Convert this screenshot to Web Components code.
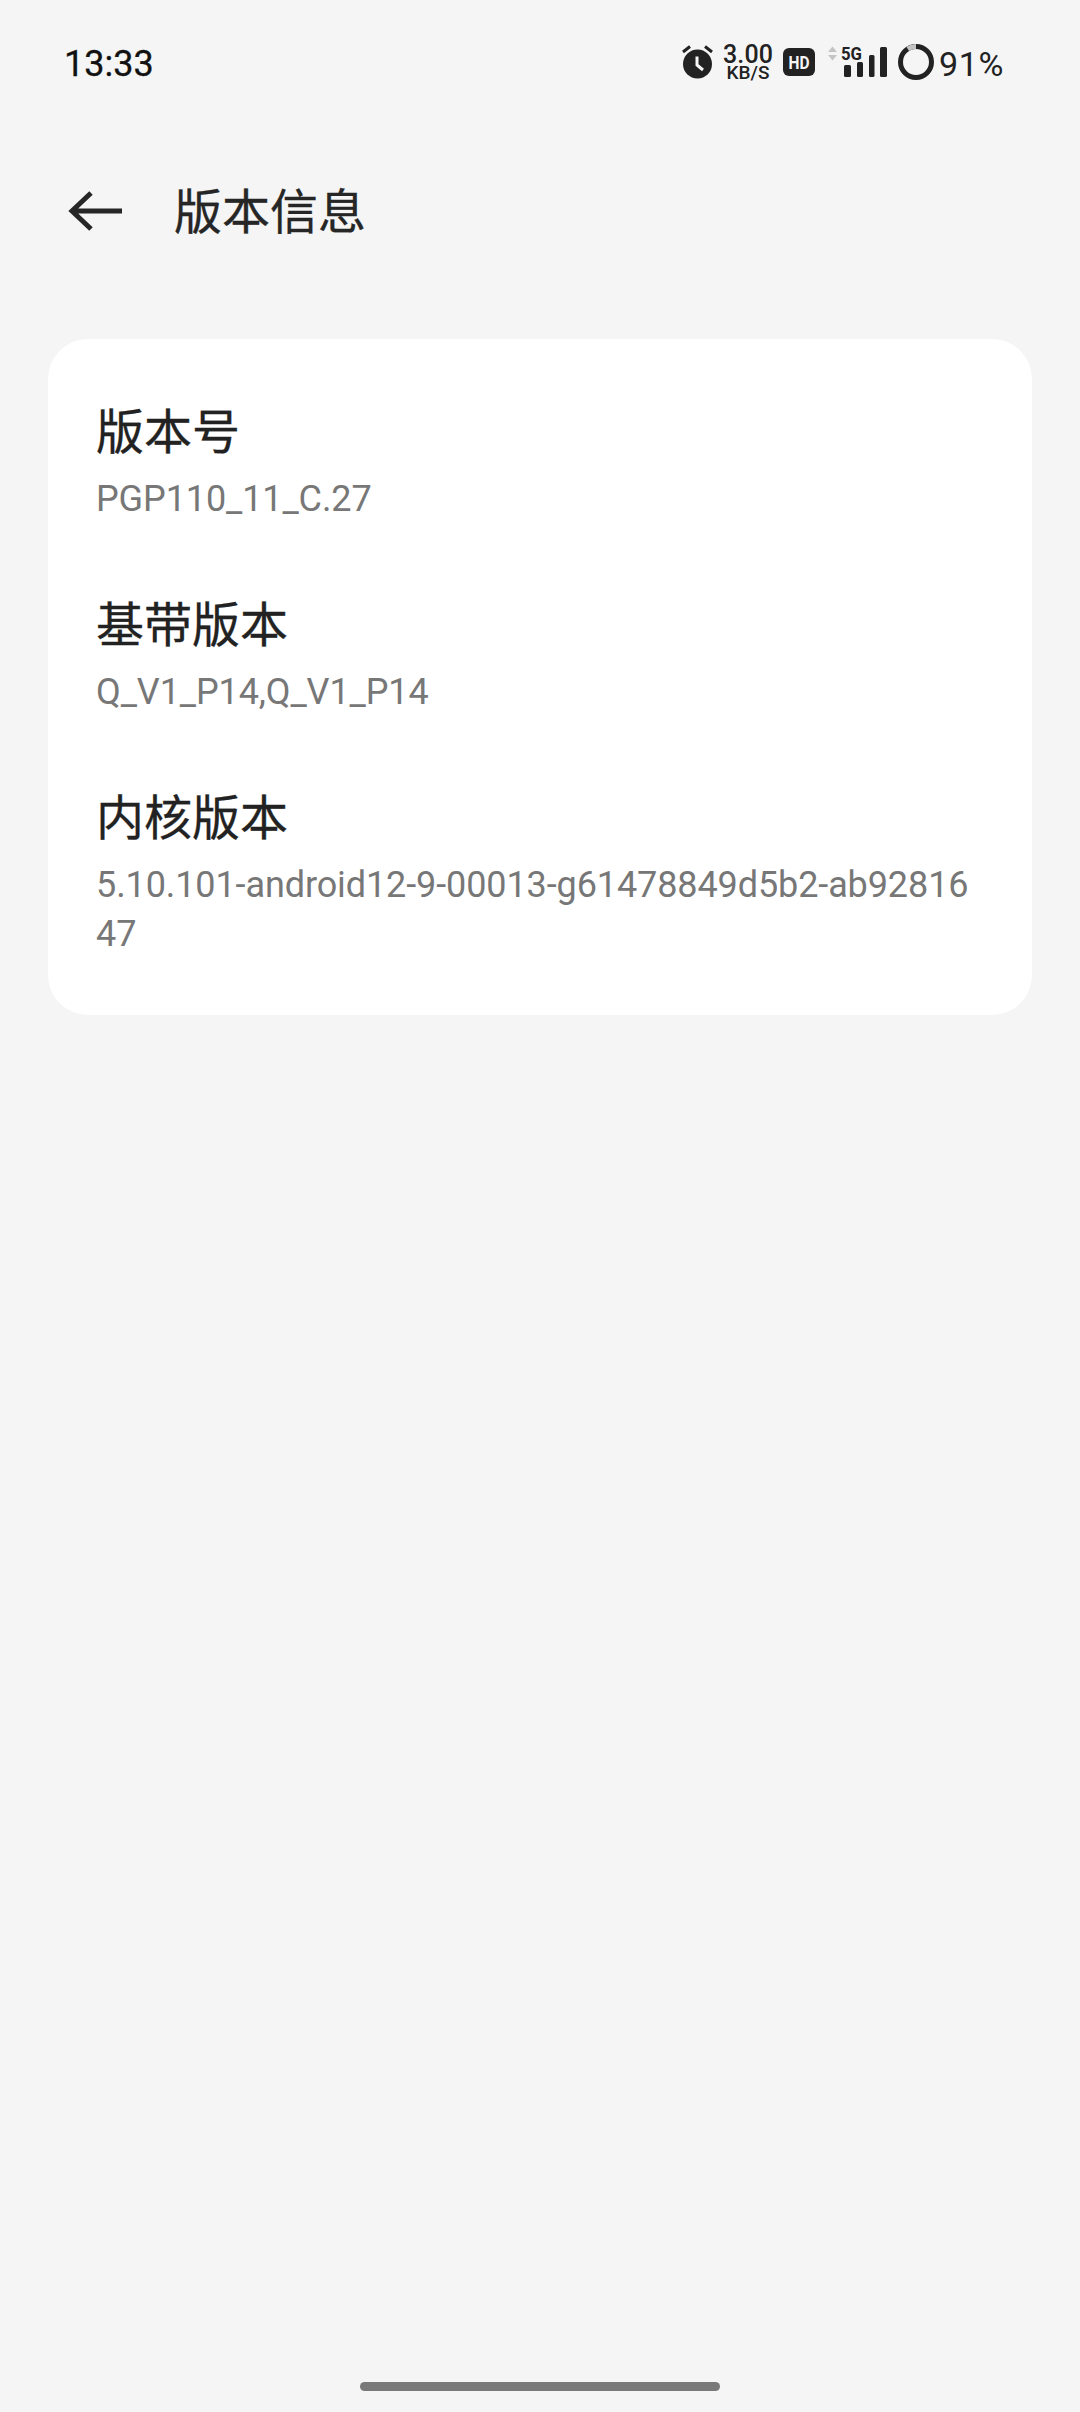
<!DOCTYPE html>
<html lang="zh-CN"><head><meta charset="utf-8"><title>版本信息</title>
<style>
html,body{margin:0;padding:0;background:#f5f5f5}
body{width:1080px;height:2412px;font-family:Roboto,"Noto Sans CJK SC",sans-serif;display:flex;flex-direction:column;overflow:hidden}
</style></head><body>
<status-bar></status-bar>
<app-bar>版本信息</app-bar>
<info-card>
  <info-row label="版本号" value="PGP110_11_C.27"></info-row>
  <info-row label="基带版本" value="Q_V1_P14,Q_V1_P14"></info-row>
  <info-row label="内核版本" value="5.10.101-android12-9-00013-g61478849d5b2-ab9281647"></info-row>
</info-card>
<gesture-bar></gesture-bar>
<script>
function def(name, html){
  customElements.define(name, class extends HTMLElement{
    constructor(){super();this.attachShadow({mode:'open'}).innerHTML=html;}
  });
}
def('status-bar',`<style>
:host{display:flex;align-items:center;justify-content:space-between;height:128px;box-sizing:border-box;padding:0 76px 0 64px;color:#222;flex:none}
.t{font:400 36px/44px Roboto,sans-serif;color:#111;-webkit-text-stroke:.3px #111}
.r{display:flex;align-items:center;margin-top:-4px}
svg{display:block;flex:none}
.sp{display:flex;flex-direction:column;align-items:center;width:50px;margin:0 10px 0 9px}
.sp b{font:500 25px/19px Roboto,sans-serif;letter-spacing:.2px}
.sp i{font:500 19px/15px Roboto,sans-serif;font-style:normal;margin-top:1px}
.pc{font:400 34px/44px Roboto,sans-serif;margin:3px 0 0 5px;letter-spacing:.6px;color:#222}
</style>
<span class="t">13:33</span>
<div class="r">
<svg width="32" height="34" viewBox="0 0 32 34"><circle cx="15.500" cy="19" r="14.500" fill="#222"/><path d="M1 7 8 1.500M30 7 23 1.500" stroke="#222" stroke-width="3"/><path d="M15 11.500V20L21 25" fill="none" stroke="#f5f5f5" stroke-width="3"/></svg>
<div class="sp"><b>3.00</b><i>KB/S</i></div>
<svg width="33" height="28" viewBox="0 0 33 28"><rect width="32" height="28" rx="6" fill="#222"/><text x="16" y="21" text-anchor="middle" font-family="Roboto,sans-serif" font-weight="700" font-size="19" fill="#f5f5f5" textLength="21" lengthAdjust="spacingAndGlyphs">HD</text></svg>
<svg width="60" height="44" viewBox="0 -10 60 44" style="margin:-10px 0 0 12px"><path d="M0 7 4.500 1.500 9 7ZM0 10 4.500 15.500 9 10Z" fill="#c4c4c4"/><text x="13" y="15" font-family="Roboto,sans-serif" font-weight="700" font-size="19" fill="#222" textLength="21" lengthAdjust="spacingAndGlyphs">5G</text>
<g fill="#222"><rect x="16" y="20" width="7" height="12" rx="1.500"/><rect x="29" y="17" width="6" height="15" rx="1.500"/><rect x="41" y="10" width="5.500" height="22" rx="1.500"/><rect x="52" y="2" width="7" height="30" rx="1.500"/></g></svg>
<svg width="36" height="36" viewBox="0 0 36 36" style="margin-left:10px"><circle cx="18" cy="18" r="15.500" fill="none" stroke="#222" stroke-width="5"/><path d="M9.700 4.900A15.500 15.500 0 0 1 18 2.500" fill="none" stroke="#c4c4c4" stroke-width="5"/></svg>
<span class="pc">91%</span>
</div>`);
def('app-bar',`<style>
:host{display:flex;align-items:center;height:84px;padding:0 0 0 68px;margin:43px 0 84px;flex:none;color:#262626;font:400 48px/64px Roboto,"Noto Sans CJK SC",sans-serif;-webkit-text-stroke:.3px #262626}
svg{display:block;margin:-4px 50px 0 0;flex:none}
</style>
<svg width="56" height="40" viewBox="0 0 56 40"><path d="M54 20H4M23 2 4 20 23 38" fill="none" stroke="#262626" stroke-width="5"/></svg>
<slot></slot>`);
def('info-card',`<style>
:host{display:flex;flex-direction:column;gap:70px;margin:0 48px;padding:62px 48px 56px;background:#fff;border-radius:40px;flex:none}
</style><slot></slot>`);
customElements.define('info-row',class extends HTMLElement{
  constructor(){super();const s=this.attachShadow({mode:'open'});
    s.innerHTML=`<style>
:host{display:block}
.l{font:400 48px/64px Roboto,"Noto Sans CJK SC",sans-serif;color:#222;-webkit-text-stroke:.3px #222}
.v{font:400 36px/49px Roboto,sans-serif;color:#777;word-break:break-all;margin-top:10px;letter-spacing:-.1px}
</style><div class="l"></div><div class="v"></div>`;
    s.querySelector('.l').textContent=this.getAttribute('label');
    s.querySelector('.v').textContent=this.getAttribute('value');}
});
def('gesture-bar',`<style>
:host{display:flex;justify-content:center;margin-top:auto;padding-bottom:21px;flex:none}
div{width:360px;height:9px;border-radius:5px;background:#797979}
</style><div></div>`);
</script>
</body></html>
